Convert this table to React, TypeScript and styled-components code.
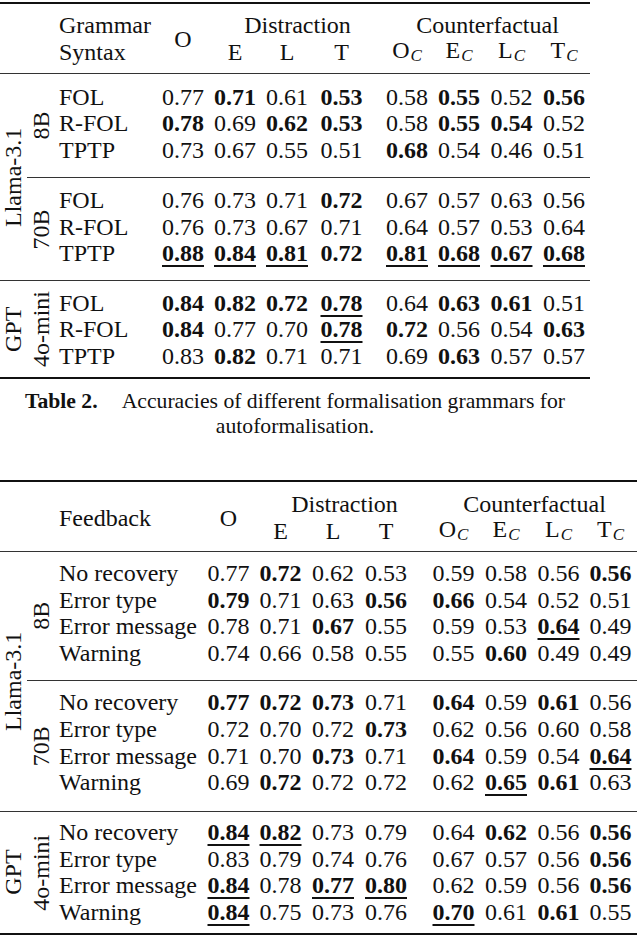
import React from 'react';
import styled, { createGlobalStyle } from 'styled-components';

const Global = createGlobalStyle`
  html, body { margin: 0; padding: 0; background: #fff; }
  body { font-family: "Liberation Serif", "Times New Roman", serif; color: #111; }
`;

const Page = styled.div`
  width: 640px;
  height: 936px;
  overflow: hidden;
  box-sizing: border-box;
  padding-top: 2px;
  display: flex;
  flex-direction: column;
  font-family: "Liberation Serif", "Times New Roman", serif;
  font-size: 24px;
  color: #111;
`;

const Table = styled.div<{ $w: number; $mt: number }>`
  width: ${(p) => p.$w}px;
  margin-top: ${(p) => p.$mt}px;
  border-top: 2px solid #111;
  border-bottom: 2px solid #111;
  display: flex;
  flex-direction: column;
  flex: none;
`;

const Header = styled.div<{ $cols: string; $pt: number; $pb: number }>`
  display: grid;
  grid-template-columns: 55px ${(p) => p.$cols};
  grid-template-rows: 27px 27px;
  padding: ${(p) => p.$pt}px 0 ${(p) => p.$pb}px;
  border-bottom: 1px solid #333;
  line-height: 27px;
`;

const HCell = styled.div<{ $col: string; $row: string; $left?: boolean; $pl?: number }>`
  grid-column: ${(p) => p.$col};
  grid-row: ${(p) => p.$row};
  text-align: ${(p) => (p.$left ? 'left' : 'center')};
  align-self: center;
  padding-left: ${(p) => p.$pl ?? 0}px;
  white-space: nowrap;
`;

const Sub = styled.span`
  font-style: italic;
  font-size: 17px;
  vertical-align: -3px;
  margin-left: 1px;
`;

const ModelBlock = styled.div`
  display: flex;
  & + & {
    border-top: 1px solid #333;
  }
`;

const VLabel = styled.div<{ $w: number }>`
  width: ${(p) => p.$w}px;
  flex: none;
  writing-mode: vertical-rl;
  transform: rotate(180deg);
  display: flex;
  align-items: center;
  justify-content: center;
  line-height: ${(p) => p.$w}px;
  white-space: nowrap;
`;

const SizeStack = styled.div`
  flex: 1;
  display: flex;
  flex-direction: column;
`;

const SizeGroup = styled.div`
  display: flex;
  & + & {
    border-top: 1px solid #333;
  }
`;

const Rows = styled.div<{ $pt: number; $pb: number }>`
  flex: 1;
  display: flex;
  flex-direction: column;
  padding: ${(p) => p.$pt}px 0 ${(p) => p.$pb}px;
`;

const DataRow = styled.div<{ $cols: string; $lh: number }>`
  display: grid;
  grid-template-columns: ${(p) => p.$cols};
  height: ${(p) => p.$lh}px;
  line-height: ${(p) => p.$lh}px;
  & > :nth-child(6) {
    grid-column-start: 7;
  }
`;

const RowLabel = styled.div`
  padding-left: 4px;
  white-space: nowrap;
`;

const Num = styled.div<{ $b?: boolean; $u?: boolean }>`
  text-align: center;
  white-space: nowrap;
  font-weight: ${(p) => (p.$b || p.$u ? 700 : 400)};
  text-decoration: ${(p) => (p.$u ? 'underline' : 'none')};
  text-decoration-thickness: 1.5px;
  text-underline-offset: 4px;
`;

const Caption = styled.p`
  margin: 10px 0 0;
  width: 590px;
  text-align: center;
  font-size: 21.7px;
  line-height: 25px;
  color: #111;
`;

const CapLabel = styled.b`
  margin-right: 24px;
`;

type Group = { size: string; pt: number; pb: number; rows: [string, string[]][] };
type Model = { name: string; groups: Group[] };

const T1_COLS = '102px 52px 52px 52px 57px 11px 52px 52px 53px 52px';
const T2_COLS = '148px 51px 53px 52px 54px 15px 51px 54px 51px 53px';

const t1: Model[] = [
  {
    name: 'Llama-3.1',
    groups: [
      {
        size: '8B',
        pt: 9.5,
        pb: 13.5,
        rows: [
          ['FOL', ['0.77', 'b0.71', '0.61', 'b0.53', '0.58', 'b0.55', '0.52', 'b0.56']],
          ['R-FOL', ['b0.78', '0.69', 'b0.62', 'b0.53', '0.58', 'b0.55', 'b0.54', '0.52']],
          ['TPTP', ['0.73', '0.67', '0.55', '0.51', 'b0.68', '0.54', '0.46', '0.51']],
        ],
      },
      {
        size: '70B',
        pt: 9.5,
        pb: 13.5,
        rows: [
          ['FOL', ['0.76', '0.73', '0.71', 'b0.72', '0.67', '0.57', '0.63', '0.56']],
          ['R-FOL', ['0.76', '0.73', '0.67', '0.71', '0.64', '0.57', '0.53', '0.64']],
          ['TPTP', ['u0.88', 'u0.84', 'u0.81', 'b0.72', 'u0.81', 'u0.68', 'u0.67', 'u0.68']],
        ],
      },
    ],
  },
  {
    name: 'GPT',
    groups: [
      {
        size: '4o-mini',
        pt: 8.5,
        pb: 8,
        rows: [
          ['FOL', ['b0.84', 'b0.82', 'b0.72', 'u0.78', '0.64', 'b0.63', 'b0.61', '0.51']],
          ['R-FOL', ['b0.84', '0.77', '0.70', 'u0.78', 'b0.72', '0.56', '0.54', 'b0.63']],
          ['TPTP', ['0.83', 'b0.82', '0.71', '0.71', '0.69', 'b0.63', '0.57', '0.57']],
        ],
      },
    ],
  },
];

const t2: Model[] = [
  {
    name: 'Llama-3.1',
    groups: [
      {
        size: '8B',
        pt: 8,
        pb: 13,
        rows: [
          ['No recovery', ['0.77', 'b0.72', '0.62', '0.53', '0.59', '0.58', '0.56', 'b0.56']],
          ['Error type', ['b0.79', '0.71', '0.63', 'b0.56', 'b0.66', '0.54', '0.52', '0.51']],
          ['Error message', ['0.78', '0.71', 'b0.67', '0.55', '0.59', '0.53', 'u0.64', '0.49']],
          ['Warning', ['0.74', '0.66', '0.58', '0.55', '0.55', 'b0.60', '0.49', '0.49']],
        ],
      },
      {
        size: '70B',
        pt: 8.5,
        pb: 15,
        rows: [
          ['No recovery', ['b0.77', 'b0.72', 'b0.73', '0.71', 'b0.64', '0.59', 'b0.61', '0.56']],
          ['Error type', ['0.72', '0.70', '0.72', 'b0.73', '0.62', '0.56', '0.60', '0.58']],
          ['Error message', ['0.71', '0.70', 'b0.73', '0.71', 'b0.64', '0.59', '0.54', 'u0.64']],
          ['Warning', ['0.69', 'b0.72', '0.72', '0.72', '0.62', 'u0.65', 'b0.61', '0.63']],
        ],
      },
    ],
  },
  {
    name: 'GPT',
    groups: [
      {
        size: '4o-mini',
        pt: 7,
        pb: 7,
        rows: [
          ['No recovery', ['u0.84', 'u0.82', '0.73', '0.79', '0.64', 'b0.62', '0.56', 'b0.56']],
          ['Error type', ['0.83', '0.79', '0.74', '0.76', '0.67', '0.57', '0.56', 'b0.56']],
          ['Error message', ['u0.84', '0.78', 'u0.77', 'u0.80', '0.62', '0.59', '0.56', 'b0.56']],
          ['Warning', ['u0.84', '0.75', '0.73', '0.76', 'u0.70', '0.61', 'b0.61', '0.55']],
        ],
      },
    ],
  },
];

const Cell = ({ v }: { v: string }) => {
  const b = v.startsWith('b');
  const u = v.startsWith('u');
  const text = b || u ? v.slice(1) : v;
  return (
    <Num $b={b} $u={u}>
      {text}
    </Num>
  );
};

const Body = ({ models, cols, lh }: { models: Model[]; cols: string; lh: number }) => (
  <>
    {models.map((m) => (
      <ModelBlock key={m.name}>
        <VLabel $w={27}>{m.name}</VLabel>
        <SizeStack>
          {m.groups.map((g) => (
            <SizeGroup key={g.size}>
              <VLabel $w={28}>{g.size}</VLabel>
              <Rows $pt={g.pt} $pb={g.pb}>
                {g.rows.map(([label, vals]) => (
                  <DataRow key={label} $cols={cols} $lh={lh}>
                    <RowLabel>{label}</RowLabel>
                    {vals.map((v, i) => (
                      <Cell key={i} v={v} />
                    ))}
                  </DataRow>
                ))}
              </Rows>
            </SizeGroup>
          ))}
        </SizeStack>
      </ModelBlock>
    ))}
  </>
);

const SubHeads = () => (
  <>
    <HCell $col="4" $row="2">E</HCell>
    <HCell $col="5" $row="2">L</HCell>
    <HCell $col="6" $row="2">T</HCell>
    <HCell $col="8" $row="2">
      O<Sub>C</Sub>
    </HCell>
    <HCell $col="9" $row="2">
      E<Sub>C</Sub>
    </HCell>
    <HCell $col="10" $row="2">
      L<Sub>C</Sub>
    </HCell>
    <HCell $col="11" $row="2">
      T<Sub>C</Sub>
    </HCell>
  </>
);

export default function App() {
  return (
    <>
      <Global />
      <Page>
        <Table $w={590} $mt={0}>
          <Header $cols={T1_COLS} $pt={8} $pb={7}>
            <HCell $col="2" $row="1" $left $pl={4}>
              Grammar
            </HCell>
            <HCell $col="2" $row="2" $left $pl={4}>
              Syntax
            </HCell>
            <HCell $col="3" $row="1 / 3">O</HCell>
            <HCell $col="4 / 7" $row="1" $pl={16}>
              Distraction
            </HCell>
            <HCell $col="8 / 12" $row="1" $pl={4}>
              Counterfactual
            </HCell>
            <SubHeads />
          </Header>
          <Body models={t1} cols={T1_COLS} lh={26.5} />
        </Table>
        <Caption>
          <CapLabel>Table 2.</CapLabel>Accuracies of different formalisation grammars for
          <br />
          autoformalisation.
        </Caption>
        <Table $w={637} $mt={41}>
          <Header $cols={T2_COLS} $pt={9} $pb={6}>
            <HCell $col="2" $row="1 / 3" $left $pl={4}>
              Feedback
            </HCell>
            <HCell $col="3" $row="1 / 3">O</HCell>
            <HCell $col="4 / 7" $row="1" $pl={22}>
              Distraction
            </HCell>
            <HCell $col="8 / 12" $row="1" $pl={4}>
              Counterfactual
            </HCell>
            <SubHeads />
          </Header>
          <Body models={t2} cols={T2_COLS} lh={26.7} />
        </Table>
      </Page>
    </>
  );
}
